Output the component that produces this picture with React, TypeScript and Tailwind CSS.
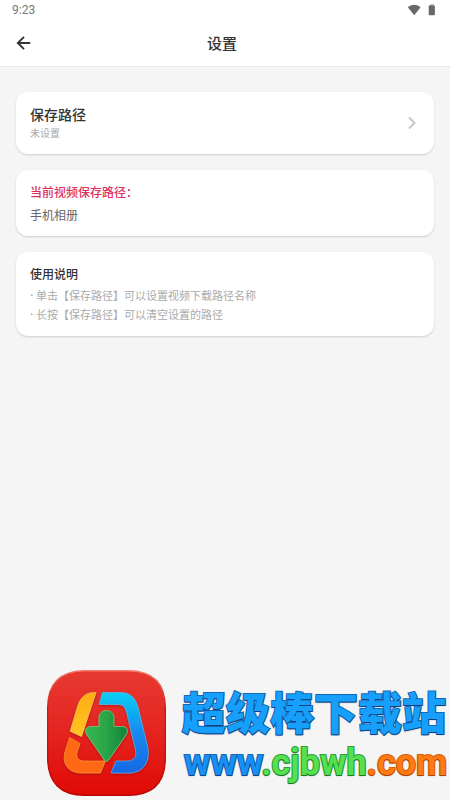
import type { ReactNode } from "react";

const usageNotes = [
  "单击【保存路径】可以设置视频下载路径名称",
  "长按【保存路径】可以清空设置的路径",
];

function StatusBar() {
  return (
    <div className="flex h-5 items-center justify-between px-3 text-[#777777]">
      <time className="font-[Roboto,sans-serif] text-[12px] leading-5">9:23</time>
      <div className="flex items-center gap-1 text-[#686868]">
        <svg className="h-3 w-4" viewBox="0 0 16 12" fill="currentColor" aria-hidden="true">
          <path d="M8.2 11.2 2.2 3.8C1.9 3.4 2 3 2.4 2.7a10 10 0 0 1 11.6 0c.4.3.5.7.2 1.1Z" />
        </svg>
        <svg className="h-3 w-3" viewBox="0 0 12 12" fill="currentColor" aria-hidden="true">
          <path d="M4 .4h4v2H4z" opacity=".6" />
          <rect x="2.7" y="1.6" width="6.2" height="9.6" rx=".8" />
        </svg>
      </div>
    </div>
  );
}

function Card({ children }: { children: ReactNode }) {
  return (
    <section className="rounded-xl bg-white px-3.5 shadow-[0_1px_2px_rgba(0,0,0,0.16)]">
      {children}
    </section>
  );
}

function AppLogo() {
  return (
    <svg className="h-[126px] w-[119px] shrink-0" viewBox="0 0 119 126" aria-hidden="true">
      <defs>
        <linearGradient id="tile" x1="0" y1="0" x2="0" y2="1">
          <stop offset="0" stopColor="#e63a30" />
          <stop offset=".5" stopColor="#e42420" />
          <stop offset="1" stopColor="#e00a06" />
        </linearGradient>
        <linearGradient id="edge" x1="0" y1="0" x2="0" y2="1">
          <stop offset="0" stopColor="#f6796f" />
          <stop offset=".3" stopColor="#c81a17" />
          <stop offset="1" stopColor="#b80504" />
        </linearGradient>
        <linearGradient id="yellow" x1="0" y1="0" x2="0" y2="1">
          <stop offset="0" stopColor="#ffac12" />
          <stop offset="1" stopColor="#ffc522" />
        </linearGradient>
        <linearGradient id="blue" x1="0" y1="0" x2="0" y2="1">
          <stop offset="0" stopColor="#08cff5" />
          <stop offset=".5" stopColor="#168aee" />
          <stop offset="1" stopColor="#1268e4" />
        </linearGradient>
        <linearGradient id="green" x1="0" y1="0" x2="1" y2="0">
          <stop offset="0" stopColor="#35b653" />
          <stop offset=".48" stopColor="#2ba647" />
          <stop offset="1" stopColor="#12823b" />
        </linearGradient>
        <filter id="lift" x="-20%" y="-20%" width="140%" height="140%">
          <feDropShadow dx="0" dy="1" stdDeviation="1" floodColor="#8d0a08" floodOpacity=".7" />
        </filter>
      </defs>
      <path
        d="M38 .7H81C106 .7 118.3 14 118.3 38V88C118.3 112 106 125.3 81 125.3H38C13 125.3 .7 112 .7 88V38C.7 14 13 .7 38 .7Z"
        fill="url(#tile)"
        stroke="url(#edge)"
        strokeWidth="1.4"
      />
      <g filter="url(#lift)" strokeLinejoin="round">
        <path
          d="M49 22.5C39 22 34 27 31 35L23.2 61.2 34.5 66.5Z"
          fill="url(#yellow)"
          stroke="#ffd45e"
          strokeWidth=".6"
        />
        <path
          d="M22.5 67.5 33 73.5 30 83C29 88 32 91 37 91H58.5L53.5 103H35C21 103 15 94 18 82Z"
          fill="#ff6915"
          stroke="#ffa03c"
          strokeWidth=".6"
        />
        <path
          d="M55.5 22.5H73C83 22.5 88 27 91 37L100.5 76C104 92 96 103 82 103H64L69 91H79C87 91 90 87 88.5 80L79.5 42C78 37 76 34.5 71 34.5H52Z"
          fill="url(#blue)"
          stroke="#55bff4"
          strokeWidth=".6"
        />
        <path
          d="M59.5 40.5C55 40.5 52 43.5 52 48V56.5H45C39 56 37 60.5 40 65L57 89.5C58.5 92 60.5 92 62 89.5L79 65C82 60.5 80 56 74 56.5H67V48C67 43.5 64 40.5 59.5 40.5Z"
          fill="url(#green)"
          stroke="#73c981"
          strokeWidth=".8"
        />
      </g>
    </svg>
  );
}

function SiteBanner() {
  return (
    <footer className="mt-auto flex items-center gap-4 pr-1 pb-1 pl-[47px]">
      <AppLogo />
      <div className="flex flex-col whitespace-nowrap">
        <p className="text-[44px] leading-[60px] font-black text-[#16a0fb] [paint-order:stroke_fill] [-webkit-text-stroke:2px_#1668b4] [text-shadow:0_1px_1px_#123d78]">
          超级棒下载站
        </p>
        <a
          href="http://www.cjbwh.com"
          className="pl-0.5 font-[Roboto,sans-serif] text-[36px] leading-[44px] font-bold [paint-order:stroke_fill]"
        >
          <span className="text-[#1690f4] [-webkit-text-stroke:2px_#1668b4] [text-shadow:0_1px_1px_#123d78]">www</span>
          <span className="text-[#55e04f] [-webkit-text-stroke:2px_#2d9f38] [text-shadow:0_1px_1px_#177029]">.cjbwh</span>
          <span className="text-[#ff7b12] [-webkit-text-stroke:2px_#d95f0c] [text-shadow:0_1px_1px_#9b3d08]">.com</span>
        </a>
      </div>
    </footer>
  );
}

export default function App() {
  return (
    <div className="flex min-h-screen flex-col overflow-x-hidden bg-[#f5f5f5] font-['Noto_Sans_CJK_SC',sans-serif] text-[#333333]">
      <header className="border-b border-[#e8e8e8] bg-white">
        <StatusBar />
        <div className="grid h-[46px] grid-cols-[48px_1fr_54px] items-center">
          <button type="button" aria-label="返回" className="flex h-full items-center pl-4">
            <svg className="size-4" viewBox="0 0 16 16" fill="none" stroke="currentColor" strokeWidth="1.9" aria-hidden="true">
              <path d="M14.2 8H2M8 1.8 1.8 8 8 14.2" />
            </svg>
          </button>
          <h1 className="text-center text-[15px] leading-5 font-medium">设置</h1>
        </div>
      </header>

      <main className="flex flex-col gap-4 px-4 pt-[25px] pb-4">
        <Card>
          <button type="button" className="flex w-full items-center justify-between py-3 text-left">
            <span className="flex flex-col">
              <span className="text-[14px] leading-5 font-medium">保存路径</span>
              <span className="text-[10px] leading-[18px] text-[#aaaaaa]">未设置</span>
            </span>
            <svg className="h-4 w-4" viewBox="0 0 16 16" fill="none" stroke="#c8c8c8" strokeWidth="2" aria-hidden="true">
              <path d="m5 2.5 5.5 5.5L5 13.5" />
            </svg>
          </button>
        </Card>

        <Card>
          <div className="py-3">
            <h2 className="text-[12px] leading-5 font-medium text-[#e03060]">当前视频保存路径：</h2>
            <p className="pt-1 text-[12px] leading-[18px] text-[#666666]">手机相册</p>
          </div>
        </Card>

        <Card>
          <div className="py-3">
            <h2 className="text-[12px] leading-5 font-medium">使用说明</h2>
            <ul className="pt-0.5 text-[11px] leading-[19px] text-[#aaaaaa]">
              {usageNotes.map((note) => (
                <li key={note} className="flex">
                  <span className="w-1.5 font-[Roboto,sans-serif] font-bold">·</span>
                  <span>{note}</span>
                </li>
              ))}
            </ul>
          </div>
        </Card>
      </main>

      <SiteBanner />
    </div>
  );
}
